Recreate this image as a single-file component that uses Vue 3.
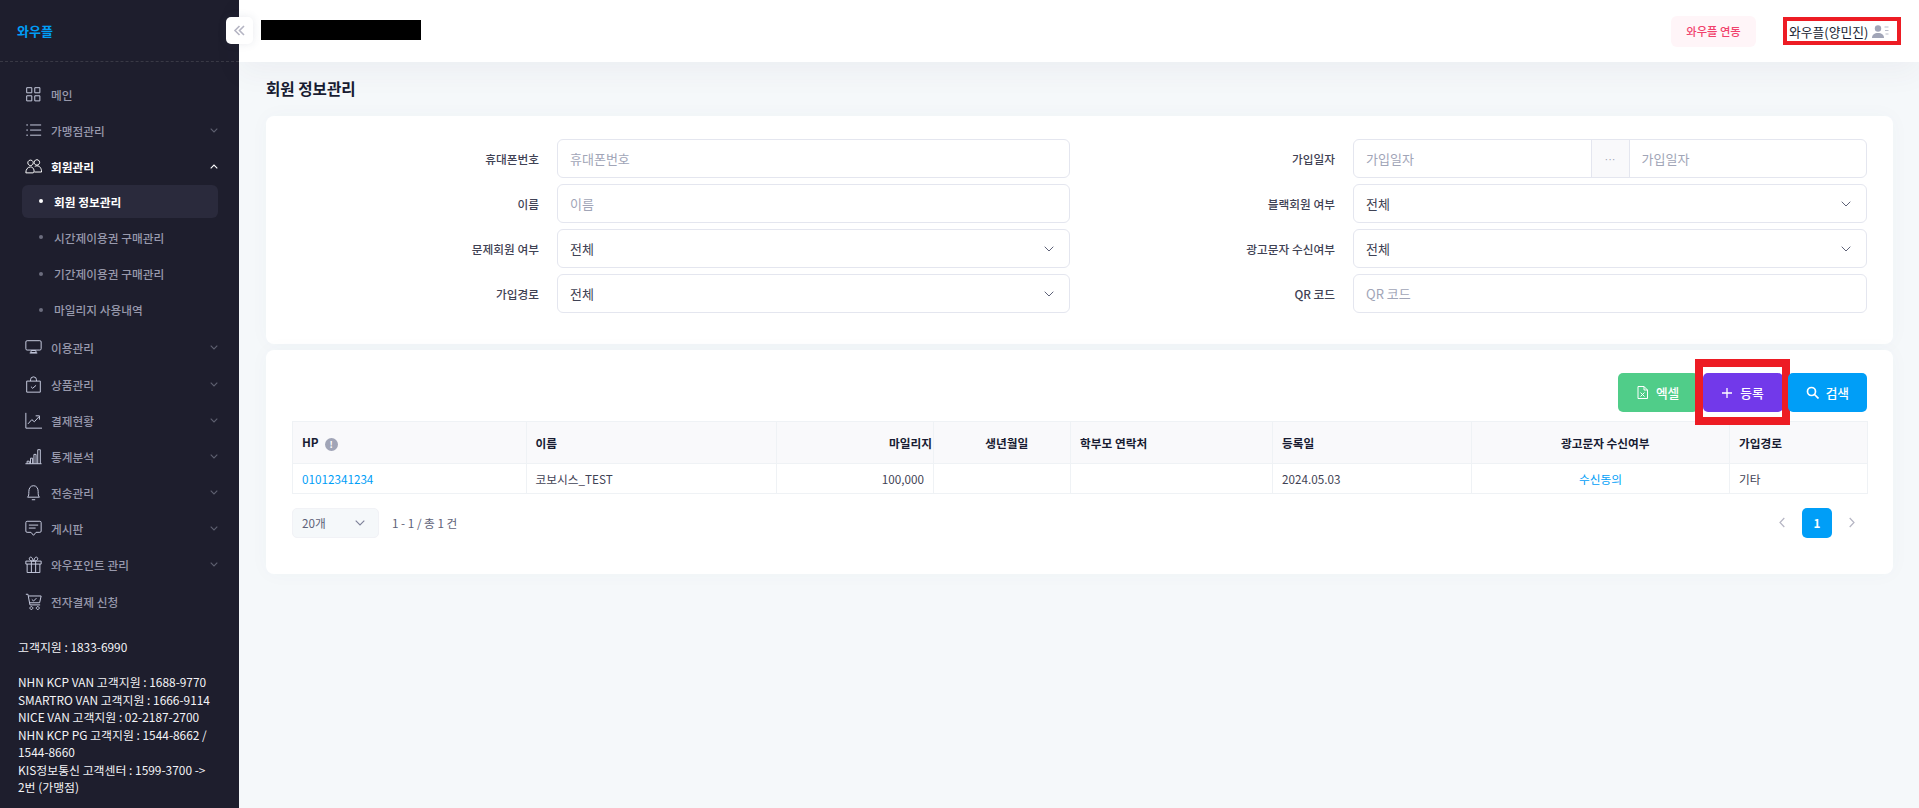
<script setup>
const menu = [
  { icon: 'grid', label: '메인' },
  { icon: 'list', label: '가맹점관리', arrow: true },
  { icon: 'people', label: '회원관리', arrow: true, open: true },
  { icon: 'monitor', label: '이용관리', arrow: true },
  { icon: 'bag', label: '상품관리', arrow: true },
  { icon: 'chart', label: '결제현황', arrow: true },
  { icon: 'bars', label: '통계분석', arrow: true },
  { icon: 'bell', label: '전송관리', arrow: true },
  { icon: 'comment', label: '게시판', arrow: true },
  { icon: 'gift', label: '와우포인트 관리', arrow: true },
  { icon: 'cart', label: '전자결제 신청' },
]
const subs = ['회원 정보관리', '시간제이용권 구매관리', '기간제이용권 구매관리', '마일리지 사용내역']
const icons = {
  grid: 'M2 2h6v6H2zM11.500 2h6v6h-6zM2 11.500h6v6H2zM11.500 11.500h6v6h-6z',
  list: 'M6 3.500h13M6 9.500h13M6 15.500h13M1.500 3.500h2M1.500 9.500h2M1.500 15.500h2',
  people: 'M6.500 2.500a3.200 3.200 0 1 0 .01 0zM14 2a3.200 3.200 0 1 0 .01 0zM1 17.500c0-4 2-7 5.500-7 2 0 3.500 1.500 4 3.500.4 1.500 0 3.500-1 3.500zM11.500 10c.8-.5 1.500-.8 2.500-.8 3.500 0 5.500 3 5.500 7.300H11',
  monitor: 'M2.500 2h15A1.500 1.500 0 0 1 19 3.500v8a1.500 1.500 0 0 1-1.500 1.500h-15A1.500 1.500 0 0 1 1 11.500v-8A1.500 1.500 0 0 1 2.500 2zM7.500 13.500l-.8 2.500h6.600l-.8-2.500zM5.500 16.500h9',
  bag: 'M2 6h16v13H2zM6.500 6V4.500a3.500 3.500 0 0 1 7 0V6M7 12.500l2 2 4-3.500',
  chart: 'M1 1v18h19M3.500 14l4.500-5 3 2.500 5.500-6M12.500 4.500H17V9',
  bars: 'M0.500 18.500h19M2.500 18.500v-3h2.500v3M6.500 18.500v-6.500h2.500v6.500M10.500 18.500V7.500h2.500v11M15 18.500V2h3v16.500',
  bell: 'M3 15.500c1.500-1.500 1.500-3 1.500-6.500 0-4 2-7 5.500-7s5.500 3 5.500 7c0 3.500 0 5 1.500 6.500zM8 18.500h4',
  comment: 'M2.500 1.500h15A1.500 1.500 0 0 1 19 3v10a1.500 1.500 0 0 1-1.500 1.500h-4.500L10 18l-3-3.500H2.500A1.500 1.500 0 0 1 1 13V3a1.500 1.500 0 0 1 1.500-1.500zM4.500 6h11M4.500 9.500h8',
  gift: 'M1 6h18v3.500H1zM2.500 9.500V19.500h15V9.500M7.500 6v13.500M12.500 6v13.500M10 6C7 6 5 5 5 3.200 5 1.200 7.500.5 8.500 2.500L10 6zM10 6c3 0 5-1 5-2.800 0-2-2.500-2.700-3.500-.7L10 6z',
  cart: 'M1 1.500h2.500l2.300 12.500h12M4.500 3.500h14.500l-1.800 8H5.500M8 7.500l2 2 3.500-3.500M7.500 16a1.700 1.700 0 1 0 .01 0zM15 16a1.700 1.700 0 1 0 .01 0z',
}
const supportLines = [
  '고객지원 : 1833-6990',
  '\u00a0',
  'NHN KCP VAN 고객지원 : 1688-9770',
  'SMARTRO VAN 고객지원 : 1666-9114',
  'NICE VAN 고객지원 : 02-2187-2700',
  'NHN KCP PG 고객지원 : 1544-8662 /',
  '1544-8660',
  'KIS정보통신 고객센터 : 1599-3700 ->',
  '2번 (가맹점)',
]
const columns = [
  { label: '이름', width: 250, align: 'left' },
  { label: '마일리지', width: 157.5, align: 'right' },
  { label: '생년월일', width: 137, align: 'center' },
  { label: '학부모 연락처', width: 202, align: 'left' },
  { label: '등록일', width: 199, align: 'left' },
  { label: '광고문자 수신여부', width: 258, align: 'center' },
  { label: '가입경로', width: 138, align: 'left' },
]
const row = ['코보시스_TEST', '100,000', '', '', '2024.05.03', '수신동의', '기타']
</script>

<template>
  <div class="layout">
    <aside class="sidebar">
      <div class="brand">와우플</div>
      <button class="collapse" aria-label="접기">
        <svg width="13" height="13" viewBox="0 0 13 13" fill="none" stroke="#b5b5c3" stroke-width="1.600"><path d="M6.500 2 2 6.500 6.500 11M11 2 6.500 6.500 11 11" /></svg>
      </button>
      <nav class="menu">
        <template v-for="item in menu" :key="item.label">
          <div class="item" :class="{ open: item.open }">
            <svg class="ico" width="17" height="17" viewBox="0 0 20 20" fill="none" stroke="currentColor" stroke-width="1.150"><path :d="icons[item.icon]" /></svg>
            <span class="item-label">{{ item.label }}</span>
            <svg v-if="item.arrow" class="arrow" width="8" height="5" viewBox="0 0 8 5" fill="none" stroke="currentColor" stroke-width="1.100"><path :d="item.open ? 'M.7 4.300 4 1l3.300 3.300' : 'M.7.700 4 4 7.300.700'" /></svg>
          </div>
          <template v-if="item.open">
            <div v-for="(s, i) in subs" :key="s" class="sub" :class="{ active: i === 0 }">
              <span class="dot"></span>{{ s }}
            </div>
          </template>
        </template>
      </nav>
      <div class="support">
        <div v-for="(l, i) in supportLines" :key="i">{{ l }}</div>
      </div>
    </aside>

    <div class="main">
      <header class="topbar">
        <div class="redacted"></div>
        <div class="top-right">
          <button class="link-btn">와우플 연동</button>
          <div class="user">
            <span>와우플(양민진)</span>
            <svg width="17" height="13" viewBox="0 0 17 13"><circle cx="6" cy="3.500" r="3.200" fill="#a1a5b7" /><path d="M0 13c0-3.500 2.500-5 6-5s6 1.500 6 5z" fill="#a1a5b7" /><path d="M12.500 2h4M13 5.500h3.500M13.500 9h3" stroke="#b9bcc9" stroke-width="1" /></svg>
            <span class="mark mark-user"></span>
          </div>
        </div>
      </header>

      <main class="content">
        <h1 class="title">회원 정보관리</h1>

        <section class="card search">
          <div class="form">
            <label class="field"><span class="lbl">휴대폰번호</span><input class="ctl" placeholder="휴대폰번호" /></label>
            <div class="field">
              <span class="lbl">가입일자</span>
              <div class="range">
                <input placeholder="가입일자" />
                <span class="sep">···</span>
                <input placeholder="가입일자" />
              </div>
            </div>
            <label class="field"><span class="lbl">이름</span><input class="ctl" placeholder="이름" /></label>
            <div class="field"><span class="lbl">블랙회원 여부</span><div class="ctl sel">전체<svg width="10" height="6" viewBox="0 0 10 6" fill="none" stroke="#5e6278" stroke-width="1"><path d="M.7.700 5 5 9.300.700" /></svg></div></div>
            <div class="field"><span class="lbl">문제회원 여부</span><div class="ctl sel">전체<svg width="10" height="6" viewBox="0 0 10 6" fill="none" stroke="#5e6278" stroke-width="1"><path d="M.7.700 5 5 9.300.700" /></svg></div></div>
            <div class="field"><span class="lbl">광고문자 수신여부</span><div class="ctl sel">전체<svg width="10" height="6" viewBox="0 0 10 6" fill="none" stroke="#5e6278" stroke-width="1"><path d="M.7.700 5 5 9.300.700" /></svg></div></div>
            <div class="field"><span class="lbl">가입경로</span><div class="ctl sel">전체<svg width="10" height="6" viewBox="0 0 10 6" fill="none" stroke="#5e6278" stroke-width="1"><path d="M.7.700 5 5 9.300.700" /></svg></div></div>
            <label class="field"><span class="lbl">QR 코드</span><input class="ctl" placeholder="QR 코드" /></label>
          </div>
        </section>

        <section class="card results">
          <div class="actions">
            <button class="btn green">
              <svg width="11" height="13" viewBox="0 0 11 13" fill="none" stroke="#fff" stroke-width="1"><path d="M1 .5h6l3.500 3.500v8.500H1zM7 .5V4h3.500M3.500 6.500l4 4M7.500 6.500l-4 4" /></svg>
              엑셀
            </button>
            <button class="btn purple">
              <svg width="10" height="10" viewBox="0 0 10 10" stroke="#fff" stroke-width="1.300"><path d="M5 0v10M0 5h10" /></svg>
              등록
              <span class="mark mark-add"></span>
            </button>
            <button class="btn blue">
              <svg width="13" height="13" viewBox="0 0 13 13" fill="none" stroke="#fff" stroke-width="1.700"><circle cx="5.500" cy="5.500" r="4" /><path d="M8.500 8.500 12.500 12.500" /></svg>
              검색
            </button>
          </div>

          <table class="grid-table">
            <colgroup>
              <col style="width: 233.5px" />
              <col v-for="c in columns" :key="c.label" :style="{ width: c.width + 'px' }" />
            </colgroup>
            <thead>
              <tr>
                <th class="left">HP<span class="info">!</span></th>
                <th v-for="c in columns" :key="c.label" :class="c.align">{{ c.label }}</th>
              </tr>
            </thead>
            <tbody>
              <tr>
                <td class="left link">01012341234</td>
                <td v-for="(v, i) in row" :key="i" :class="[columns[i].align, { link: i === 5 }]">{{ v }}</td>
              </tr>
            </tbody>
          </table>

          <div class="pager">
            <div class="size">20개<svg width="10" height="6" viewBox="0 0 10 6" fill="none" stroke="#7e8299" stroke-width="1.100"><path d="M.7.700 5 5 9.300.700" /></svg></div>
            <span class="count">1 - 1 / 총 1 건</span>
            <div class="pages">
              <svg width="6" height="11" viewBox="0 0 6 11" fill="none" stroke="#b5b5c3" stroke-width="1.200"><path d="M5.300 1 1 5.500 5.300 10" /></svg>
              <span class="page-no">1</span>
              <svg width="6" height="11" viewBox="0 0 6 11" fill="none" stroke="#b5b5c3" stroke-width="1.200"><path d="M.7 1 5 5.500.7 10" /></svg>
            </div>
          </div>
        </section>
      </main>
    </div>
  </div>
</template>

<style>
html, body { margin: 0; background: #f5f8fa; }
</style>

<style scoped>
.layout {
  display: flex;
  height: 808px;
  overflow: hidden;
  font-family: "Noto Sans CJK KR", "Noto Sans", sans-serif;
  font-size: 11.700px;
  color: #181c32;
}
.sidebar {
  position: relative;
  flex: 0 0 239px;
  background: #1e1e2d;
  color: #9899ac;
  display: flex;
  flex-direction: column;
}
.brand {
  height: 62px;
  box-sizing: border-box;
  padding: 0 0 0 17px;
  line-height: 61px;
  color: #009ef7;
  font-weight: 700;
  font-size: 13px;
  border-bottom: 1px dashed #393945;
}
.collapse {
  position: absolute;
  left: 226px;
  top: 17px;
  width: 27px;
  height: 27px;
  padding: 0;
  border: 0;
  border-radius: 5px;
  background: #fff;
  box-shadow: 0 0 8px rgba(76, 87, 125, .12);
  display: flex;
  align-items: center;
  justify-content: center;
  z-index: 2;
}
.menu { padding-top: 14px; }
.item {
  height: 36.200px;
  display: flex;
  align-items: center;
  padding: 0 21px 0 25px;
  font-weight: 500;
}
.item .ico { color: #c9cde0; flex: none; margin-right: 9px; }
.item-label { flex: 1; }
.item .arrow { color: #5e6070; }
.item.open, .item.open .ico, .item.open .arrow { color: #fff; font-weight: 700; }
.sub {
  height: 33px;
  margin: 0 21px 3.300px 22px;
  border-radius: 6px;
  display: flex;
  align-items: center;
  padding-left: 17px;
  font-weight: 500;
}
.sub .dot {
  width: 4px;
  height: 4px;
  border-radius: 50%;
  background: #6c6d7e;
  margin-right: 11px;
}
.sub.active { background: #2a2a3c; color: #fff; font-weight: 700; }
.sub.active .dot { background: #fff; }
.support {
  position: absolute;
  left: 18px;
  top: 638px;
  color: #f3f3f6;
  font-size: 11.900px;
  line-height: 17.550px;
  white-space: nowrap;
}
.main { flex: 1; min-width: 0; display: flex; flex-direction: column; }
.topbar {
  position: relative;
  height: 62px;
  flex: none;
  background: #fff;
  display: flex;
  align-items: center;
  justify-content: space-between;
  padding: 0 22px 0 22px;
  box-shadow: 0 10px 30px rgba(82, 63, 105, .05);
}
.redacted { width: 160px; height: 20px; background: #000; margin-top: -2px; }
.top-right { display: flex; align-items: center; gap: 31px; }
.link-btn {
  width: 85px;
  height: 31px;
  border: 0;
  border-radius: 6px;
  background: #fff5f8;
  color: #f1416c;
  font: 500 11.300px "Noto Sans CJK KR", sans-serif;
}
.user {
  position: relative;
  width: 110px;
  height: 20px;
  display: flex;
  align-items: center;
  gap: 4px;
  padding-left: 2px;
  box-sizing: border-box;
  font-size: 12.800px;
  color: #181c32;
}
.mark { position: absolute; border-style: solid; border-color: #ed1c24; box-sizing: border-box; pointer-events: none; }
.mark-user { left: -4px; top: -4px; width: 118px; height: 28px; border-width: 4px; }
.content { flex: 1; padding: 0 26px 0 27px; }
.title { margin: 0; height: 54px; line-height: 53px; font-size: 15.600px; font-weight: 700; color: #181c32; }
.card {
  background: #fff;
  border-radius: 8px;
  box-shadow: 0 0 20px rgba(76, 87, 125, .03);
  padding: 0 26px;
}
.search { height: 228px; box-sizing: border-box; padding-top: 23px; margin-bottom: 6px; }
.form { display: grid; grid-template-columns: 778px 1fr; column-gap: 18px; row-gap: 6px; }
.field { display: grid; grid-template-columns: 247px 1fr; column-gap: 18px; align-items: center; }
.lbl { text-align: right; font-size: 11.700px; color: #3f4254; font-weight: 500; }
.ctl, .range {
  height: 39px;
  box-sizing: border-box;
  border: 1px solid #e4e6ef;
  border-radius: 6px;
  background: #fff;
  width: 100%;
  font: 13px "Noto Sans CJK KR", sans-serif;
  color: #5e6278;
}
input.ctl, .range input { padding: 0 12px; outline: none; }
input::placeholder { color: #a1a5b7; opacity: 1; }
.sel { display: flex; align-items: center; justify-content: space-between; padding: 0 15px 0 12px; color: #3f4254; }
.range { display: flex; overflow: hidden; }
.range input { flex: 1; min-width: 0; border: 0; font: inherit; background: transparent; }
.sep {
  flex: 0 0 39px;
  box-sizing: border-box;
  display: flex;
  align-items: center;
  justify-content: center;
  background: #f9f9fb;
  border-left: 1px solid #e4e6ef;
  border-right: 1px solid #e4e6ef;
  color: #a1a5b7;
  font: 11px "Liberation Sans", sans-serif;
}
.results { height: 224px; box-sizing: border-box; padding-top: 23px; }
.actions { display: flex; justify-content: flex-end; gap: 5px; }
.btn {
  position: relative;
  height: 39px;
  padding: 0 19px;
  border: 0;
  border-radius: 5px;
  color: #fff;
  font: 500 12.700px "Noto Sans CJK KR", sans-serif;
  display: flex;
  align-items: center;
  justify-content: center;
  gap: 8px;
}
.green { background: #50cd89; }
.purple { background: #7239ea; }
.blue { background: #009ef7; padding: 0 18px; gap: 7px; }
.mark-add { left: -8px; top: -14px; width: 95px; height: 66px; border-width: 8px; }
.grid-table {
  width: 1575px;
  table-layout: fixed;
  border-collapse: collapse;
  margin-top: 9px;
  font-size: 11.700px;
}
.grid-table th {
  box-sizing: border-box;
  height: 41.500px;
  background: #f9f9fb;
  font-weight: 700;
  border: 1px solid #eff2f5;
  padding: 0 9px;
  color: #181c32;
}
.grid-table th.right { padding-right: 1px; }
.grid-table th.center { padding-left: 18.500px; }
.grid-table td {
  box-sizing: border-box;
  height: 30px;
  border: 1px solid #eff2f5;
  padding: 0 9px;
  color: #3f4254;
}
.left { text-align: left; }
.right { text-align: right; }
.center { text-align: center; }
.grid-table td.link { color: #009ef7; }
.info {
  display: inline-flex;
  width: 13px;
  height: 13px;
  border-radius: 50%;
  background: #a1a5b7;
  color: #fff;
  font-size: 9px;
  font-weight: 700;
  align-items: center;
  justify-content: center;
  margin-left: 6px;
  vertical-align: -1px;
}
.pager { display: flex; align-items: center; margin-top: 14px; color: #5e6278; }
.size {
  width: 87px;
  height: 30px;
  box-sizing: border-box;
  background: #f5f8fa;
  border: 1px solid #f1f2f6;
  border-radius: 5px;
  display: flex;
  align-items: center;
  justify-content: space-between;
  padding: 0 13px 0 9px;
}
.count { margin-left: 13px; }
.pages { margin-left: auto; display: flex; align-items: center; gap: 17px; margin-right: 12px; }
.page-no {
  width: 30px;
  height: 30px;
  border-radius: 5px;
  background: #009ef7;
  color: #fff;
  font-weight: 700;
  display: flex;
  align-items: center;
  justify-content: center;
}
</style>
